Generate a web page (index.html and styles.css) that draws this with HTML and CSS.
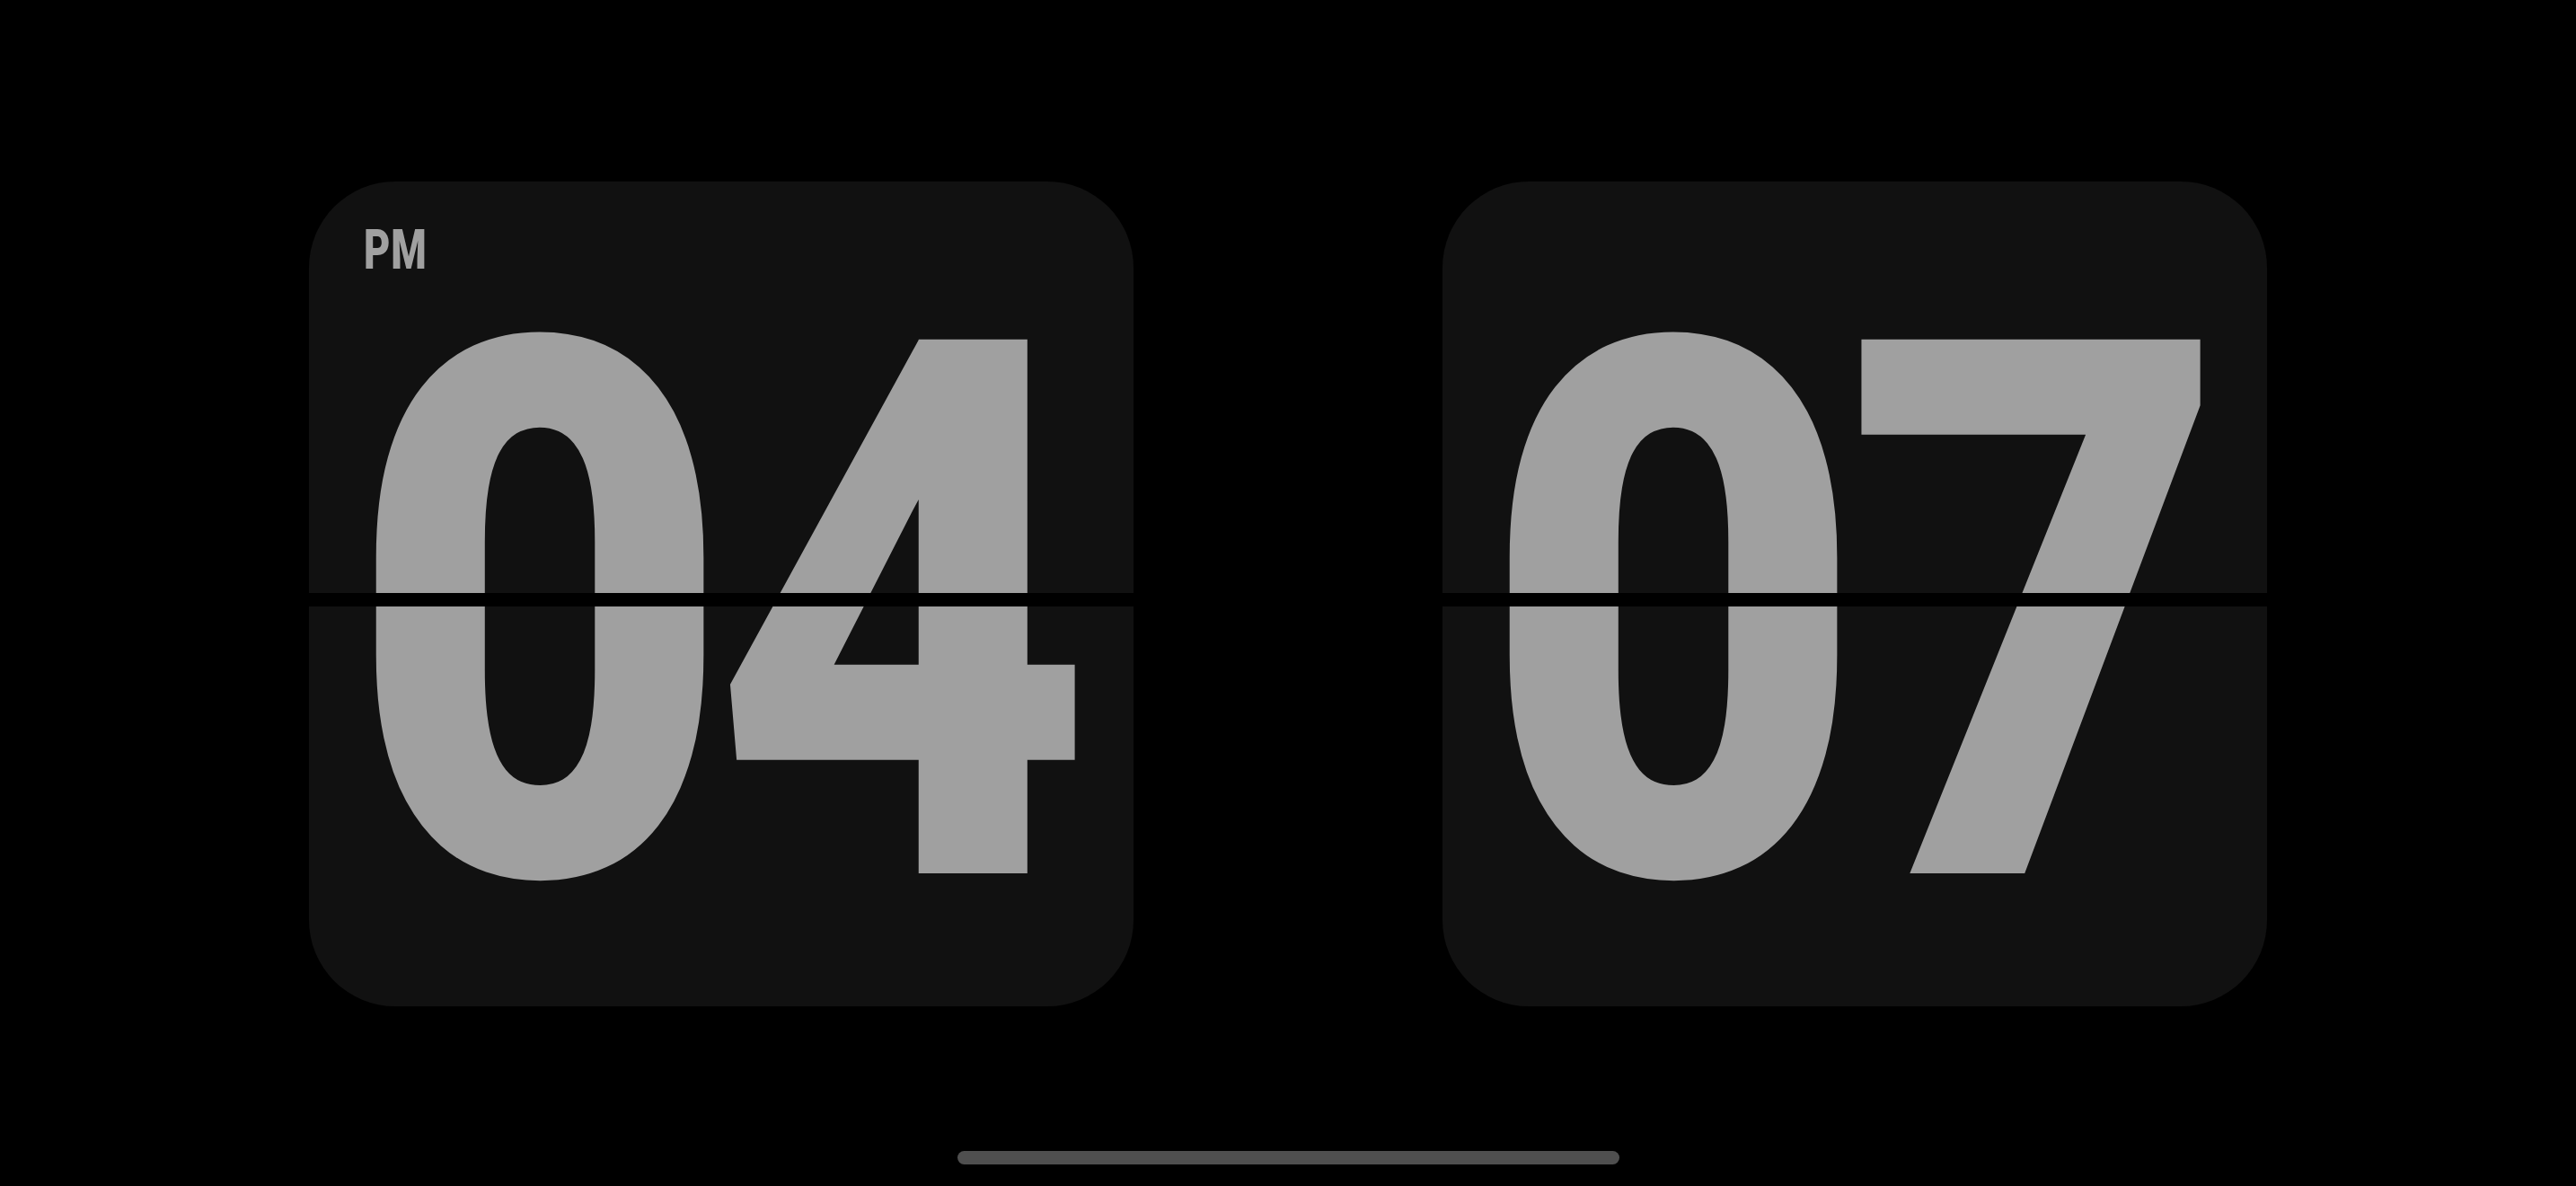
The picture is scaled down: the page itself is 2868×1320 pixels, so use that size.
FILE: index.html
```html
<!DOCTYPE html>
<html lang="en">
<head>
<meta charset="utf-8">
<title>Flip Clock</title>
<link rel="stylesheet" href="styles.css">
</head>
<body>
<main class="screen">
  <section class="clock">
    <div class="card">
      <span class="meridiem">PM</span>
      <div class="digits"><span class="digit">0</span><span class="digit">4</span></div>
      <div class="split"></div>
    </div>
    <div class="card">
      <div class="digits"><span class="digit">0</span><span class="digit">7</span></div>
      <div class="split"></div>
    </div>
  </section>
  <div class="home-indicator"></div>
</main>
</body>
</html>
```

FILE: styles.css
```css
html, body {
  margin: 0;
  padding: 0;
  background: #000000;
}

.screen {
  width: 2868px;
  height: 1320px;
  display: flex;
  flex-direction: column;
  align-items: center;
  padding-top: 202px;
  box-sizing: border-box;
  overflow: hidden;
}

.clock {
  display: flex;
  gap: 344px;
}

.card {
  position: relative;
  width: 918px;
  height: 918px;
  background: #111111;
  border-radius: 96px;
  display: flex;
  align-items: center;
  justify-content: center;
  overflow: hidden;
}

.meridiem {
  position: absolute;
  left: 61px;
  top: 46px;
  font-family: "Roboto", "Liberation Sans", sans-serif;
  font-weight: 900;
  font-size: 61px;
  line-height: 1;
  color: #a0a0a0;
  transform: scaleX(0.74);
  transform-origin: left top;
  letter-spacing: 1px;
}

.digits {
  display: flex;
  padding-top: 50px;
  font-family: "Roboto", "Liberation Sans", sans-serif;
  font-weight: 900;
  font-size: 836px;
  line-height: 620px;
  color: #a0a0a0;
  transform: scaleX(0.88);
}

.digit {
  width: 459px;
  display: flex;
  justify-content: center;
}

.split {
  position: absolute;
  left: 0;
  right: 0;
  top: 458px;
  height: 15px;
  background: #000000;
}

.home-indicator {
  margin-top: 161px;
  width: 737px;
  height: 15px;
  border-radius: 8px;
  background: #4f4f4f;
}
```
